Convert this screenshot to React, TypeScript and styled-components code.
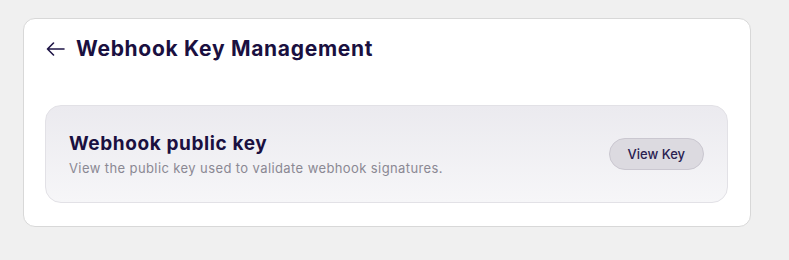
import React from "react";
import styled, { createGlobalStyle } from "styled-components";

const Global = createGlobalStyle`
  html, body { margin: 0; padding: 0; background: #f0f0f0; }
  body { font-family: "Inter", "Noto Sans", sans-serif; }
`;

const Page = styled.div`
  padding: 18px 0 0 23px;
  width: 789px;
  height: 260px;
  box-sizing: border-box;
`;

const Card = styled.section`
  width: 728px;
  height: 209px;
  box-sizing: border-box;
  background: #ffffff;
  border: 1px solid #d8d8d8;
  border-radius: 12px;
  padding: 16px 22px 0 21px;
  display: flex;
  flex-direction: column;
`;

const Header = styled.div`
  display: flex;
  align-items: center;
  gap: 11px;
  height: 27px;
`;

const BackButton = styled.button`
  border: none;
  background: none;
  padding: 0;
  width: 20px;
  height: 20px;
  display: flex;
  align-items: center;
  justify-content: center;
  color: #1e1446;
  cursor: pointer;
`;

const Title = styled.h1`
  margin: 0;
  font-size: 21px;
  font-weight: 700;
  color: #1a1040;
  letter-spacing: 0.7px;
`;

const Panel = styled.div`
  margin-top: 43px;
  height: 98px;
  box-sizing: border-box;
  border: 1px solid #e2e1e6;
  border-radius: 16px;
  background: linear-gradient(180deg, #ebeaef 0%, #f6f6f8 100%);
  display: flex;
  align-items: center;
  justify-content: space-between;
  padding: 0 23px 0 23px;
`;

const PanelText = styled.div`
  display: flex;
  flex-direction: column;
  gap: 5px;
`;

const PanelTitle = styled.h2`
  margin: 0;
  font-size: 19px;
  font-weight: 700;
  color: #1a1040;
  letter-spacing: 0.6px;
`;

const PanelDesc = styled.p`
  margin: 0;
  font-size: 13px;
  color: #8a8893;
  letter-spacing: 0.4px;
`;

const ViewButton = styled.button`
  height: 32px;
  padding: 0 18px;
  border-radius: 16px;
  border: 1px solid #cac7d0;
  background: #dcdae0;
  color: #2a2150;
  font-family: inherit;
  font-size: 13px;
  font-weight: 500;
  cursor: pointer;
`;

export default function App() {
  return (
    <>
      <Global />
      <Page>
        <Card>
          <Header>
            <BackButton aria-label="Back">
              <svg width="19" height="14" viewBox="0 0 19 14" fill="none" stroke="currentColor" strokeWidth="1.6" strokeLinecap="round" strokeLinejoin="round">
                <path d="M18 7H1.5M7.5 1L1.5 7l6 6" />
              </svg>
            </BackButton>
            <Title>Webhook Key Management</Title>
          </Header>
          <Panel>
            <PanelText>
              <PanelTitle>Webhook public key</PanelTitle>
              <PanelDesc>View the public key used to validate webhook signatures.</PanelDesc>
            </PanelText>
            <ViewButton>View Key</ViewButton>
          </Panel>
        </Card>
      </Page>
    </>
  );
}
